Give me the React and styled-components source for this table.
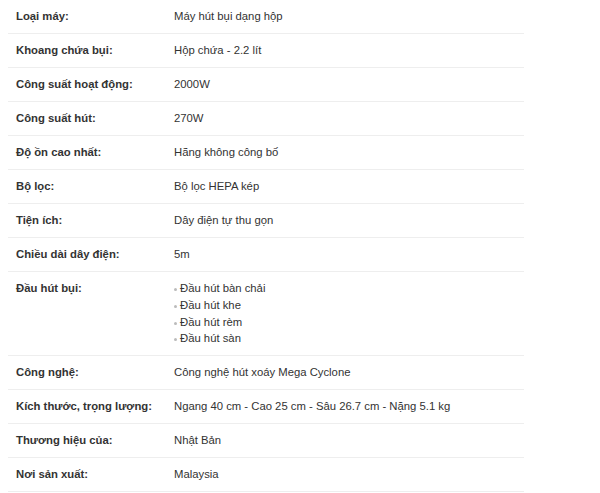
import React from 'react';
import styled, { createGlobalStyle } from 'styled-components';

const GlobalStyle = createGlobalStyle`
  body {
    margin: 0;
    background: #fff;
    font-family: Arial, 'Liberation Sans', sans-serif;
  }
`;

const Page = styled.div`
  padding: 0 76px 0 8px;
`;

const Table = styled.div`
  width: 516px;
  display: flex;
  flex-direction: column;
`;

const Row = styled.div`
  display: grid;
  grid-template-columns: 158px 1fr;
  border-bottom: 1px solid #eee;
  padding: 8px 0;
  font-size: 11.3px;
  line-height: 17px;
  color: #333;
`;

const Label = styled.div`
  padding-left: 8px;
  font-weight: bold;
  color: #333;
`;

const Value = styled.div`
  padding-left: 8px;
`;

const List = styled.ul`
  list-style: none;
  margin: 0;
  padding: 0;

  li {
    position: relative;
    padding-left: 6px;
    line-height: 16.75px;

    &::before {
      content: '';
      position: absolute;
      left: 0;
      top: 8px;
      width: 3px;
      height: 3px;
      border-radius: 50%;
      background: #bbb;
    }
  }
`;

const specs = [
  ['Loại máy:', 'Máy hút bụi dạng hộp'],
  ['Khoang chứa bụi:', 'Hộp chứa - 2.2 lít'],
  ['Công suất hoạt động:', '2000W'],
  ['Công suất hút:', '270W'],
  ['Độ ồn cao nhất:', 'Hãng không công bố'],
  ['Bộ lọc:', 'Bộ lọc HEPA kép'],
  ['Tiện ích:', 'Dây điện tự thu gọn'],
  ['Chiều dài dây điện:', '5m'],
  ['Đầu hút bụi:', ['Đầu hút bàn chải', 'Đầu hút khe', 'Đầu hút rèm', 'Đầu hút sàn']],
  ['Công nghệ:', 'Công nghệ hút xoáy Mega Cyclone'],
  ['Kích thước, trọng lượng:', 'Ngang 40 cm - Cao 25 cm - Sâu 26.7 cm - Nặng 5.1 kg'],
  ['Thương hiệu của:', 'Nhật Bản'],
  ['Nơi sản xuất:', 'Malaysia'],
];

const App = () => (
  <Page>
    <GlobalStyle />
    <Table>
      {specs.map(([label, value]) => (
        <Row key={label}>
          <Label>{label}</Label>
          <Value>
            {Array.isArray(value) ? (
              <List>
                {value.map((v) => (
                  <li key={v}>{v}</li>
                ))}
              </List>
            ) : (
              value
            )}
          </Value>
        </Row>
      ))}
    </Table>
  </Page>
);

export default App;
